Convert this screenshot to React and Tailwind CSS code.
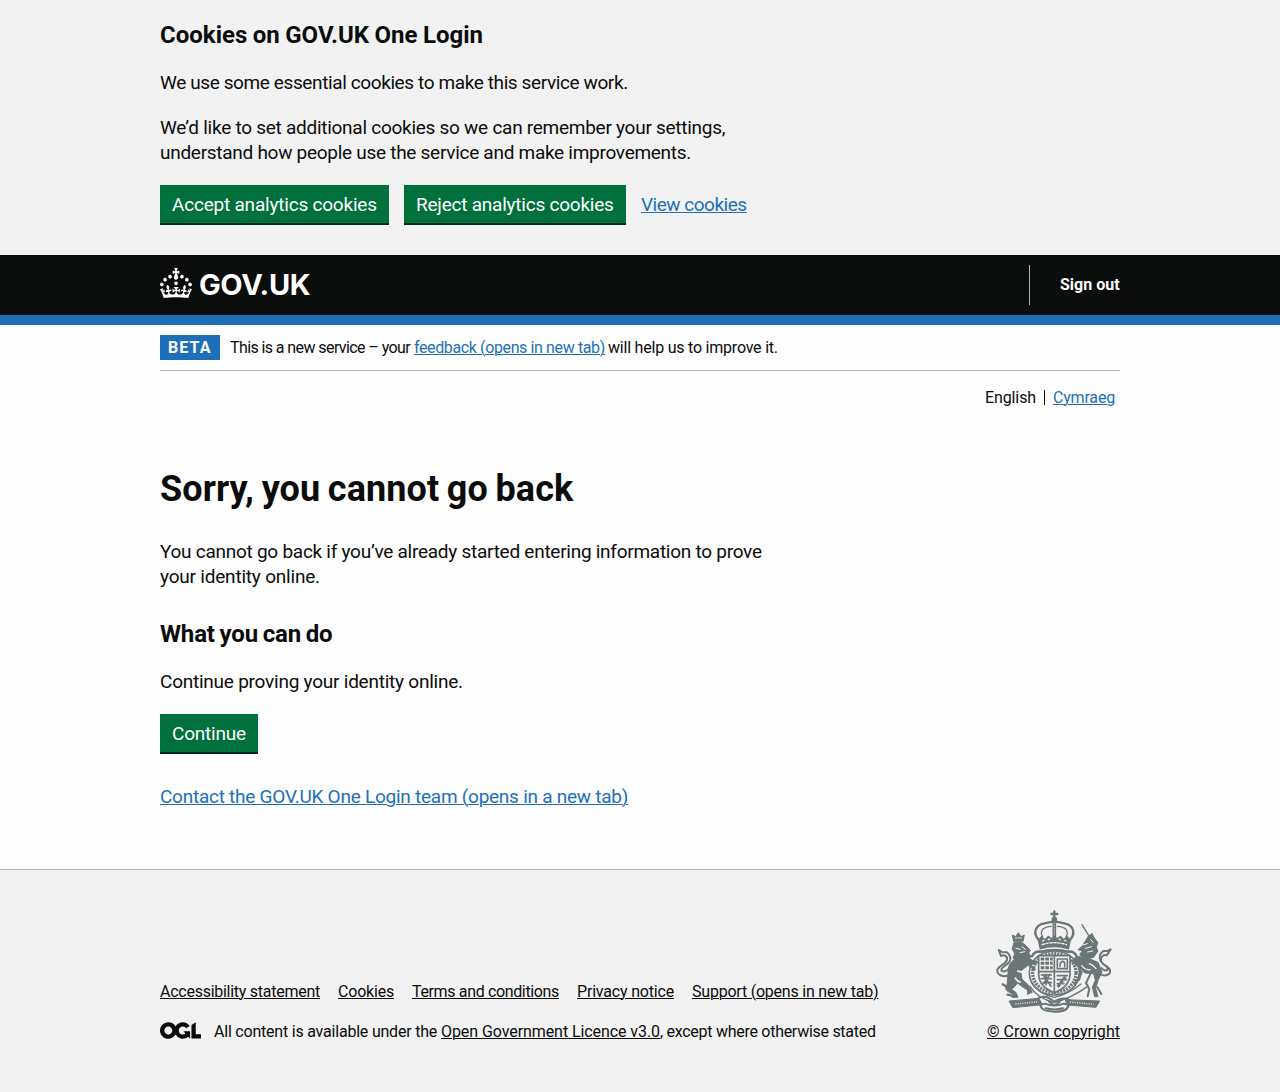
const link =
  "text-[#1d70b8] underline decoration-1 underline-offset-[1px]";
const darkLink =
  "text-[#0b0c0c] underline decoration-1 underline-offset-[1px]";
const button =
  "h-[38px] bg-[#00703c] pl-3 text-left text-[19px] leading-[40px] text-white shadow-[0_2px_0_#002d18] whitespace-nowrap";

function Crown() {
  return (
    <svg className="mb-[5px] h-[30px] w-8 shrink-0" viewBox="0 0 32 30" fill="currentColor" aria-hidden="true">
      <path d="M22.6 10.4c-1 .4-2-.1-2.4-1-.4-.9.1-2 1-2.4.9-.4 2 .1 2.4 1s-.1 2-1 2.4m-5.9 6.7c-.9.4-2-.1-2.4-1-.4-.9.1-2 1-2.4.9-.4 2 .1 2.4 1s-.1 2-1 2.4m10.8-3.7c-1 .4-2-.1-2.4-1-.4-.9.1-2 1-2.4.9-.4 2 .1 2.4 1s0 2-1 2.4m3.3 4.8c-1 .4-2-.1-2.4-1-.4-.9.1-2 1-2.4.9-.4 2 .1 2.4 1s-.1 2-1 2.4M17 4.7l2.3 1.2V2.5l-2.3.7-.2-.2.9-3h-3.4l.9 3-.2.2c-.1.1-2.3-.7-2.3-.7v3.4L15 4.7c.1.1.1.2.2.2l-1.3 4c-.1.2-.1.4-.1.6 0 1.1.8 2 1.9 2.2h.7c1-.2 1.9-1.1 1.9-2.1 0-.2 0-.4-.1-.6l-1.3-4c-.1-.2 0-.2.1-.3m-7.6 5.7c.9.4 2-.1 2.4-1 .4-.9-.1-2-1-2.4-.9-.4-2 .1-2.4 1s0 2 1 2.4m-5 3c.9.4 2-.1 2.4-1 .4-.9-.1-2-1-2.4-.9-.4-2 .1-2.4 1s.1 2 1 2.4m-3.2 4.8c.9.4 2-.1 2.4-1 .4-.9-.1-2-1-2.4-.9-.4-2 .1-2.4 1s0 2 1 2.4m14.8 11c4.4 0 8.6.3 12.3.8 1.1-4.5 2.4-7 3.7-8.8l-2.5-.9c.2 1.3.3 1.9 0 2.7-.4-.4-.8-1.1-1.1-2.3l-1.2 4c.7-.5 1.3-.8 2-.9-1.1 2.5-2.6 3.1-3.5 3-1.1-.2-1.7-1.2-1.5-2.1.3-1.2 1.5-1.5 2.1-.1 1.1-2.3-.8-3-2-2.3 1.9-1.9 2.1-3.5.6-5.6-2.1 1.6-2.1 3.2-1.2 5.5-1.2-1.4-3.2-.6-2.5 1.6.9-1.4 2.1-.5 1.9.8-.2 1.1-1.7 2.1-3.5 1.9-2.7-.2-2.9-2.1-2.9-3.6.7-.1 1.9.5 2.9 1.9l.4-4.3c-1.1 1.1-2.1 1.4-3.2 1.4.4-1.2 2.1-3 2.1-3h-5.4s1.7 1.9 2.1 3c-1.1 0-2.1-.2-3.2-1.4l.4 4.3c1-1.4 2.2-2 2.9-1.9-.1 1.5-.2 3.4-2.9 3.6-1.9.2-3.4-.8-3.5-1.9-.2-1.3 1-2.2 1.9-.8.7-2.3-1.2-3-2.5-1.6.9-2.2.9-3.9-1.2-5.5-1.5 2-1.3 3.7.6 5.6-1.2-.7-3.1 0-2 2.3.6-1.4 1.8-1.1 2.1.1.2.9-.3 1.9-1.5 2.1-.9.2-2.4-.5-3.5-3 .6 0 1.2.3 2 .9l-1.2-4c-.3 1.1-.7 1.9-1.1 2.3-.3-.8-.2-1.4 0-2.7l-2.9.9C1.3 23 2.6 25.5 3.7 30c3.7-.5 7.9-.8 12.3-.8" />
    </svg>
  );
}

function OglLogo() {
  return (
    <svg className="mb-[3px] h-[17px] w-[41px] shrink-0" viewBox="0 0 483.2 195.7" fill="#0b0c0c" aria-hidden="true">
      <path d="M421.5 142.8V.1l-50.7 32.3v161.1h112.4v-50.7zm-122.3-9.6A47.12 47.12 0 0 1 221 97.8c0-26 21.1-47.1 47.1-47.1 16.7 0 31.4 8.7 39.7 21.8l42.7-27.2A97.63 97.63 0 0 0 268.1 0c-36.5 0-68.3 20.1-85.1 49.7A98 98 0 0 0 97.8 0C43.9 0 0 43.9 0 97.8s43.9 97.8 97.8 97.8c36.5 0 68.3-20.1 85.1-49.7a97.76 97.76 0 0 0 149.6 25.4l19.4 22.2h3v-87.8h-80l24.3 27.5zM97.8 145c-26 0-47.1-21.1-47.1-47.1s21.1-47.1 47.1-47.1 47.1 21.1 47.1 47.1S123.8 145 97.8 145" />
    </svg>
  );
}

function RoyalArms() {
  return (
    <svg
      className="h-[106px] w-[120px]"
      viewBox="42 24 360 318"
      fill="none"
      stroke="#6c7676"
      strokeWidth="5"
      strokeLinecap="round"
      strokeLinejoin="round"
      aria-hidden="true"
    >
      {/* crown */}
      <path d="M223 31v18M214 39h18" strokeWidth="7" />
      <circle cx="223" cy="56" r="6" fill="#6c7676" />
      <path d="M177 118C157 96 166 74 190 68c12-3 23-6 33-6s21 3 33 6c24 6 33 28 13 50" strokeWidth="7" />
      <path d="M188 108c-9-12-2-24 8-28 7-3 13-4 18-4M258 108c9-12 2-24-8-28-7-3-13-4-18-4" strokeWidth="4" />
      <path d="M223 62v46" strokeWidth="11" />
      <path d="M223 68v38" stroke="#f2f2f2" strokeWidth="2" strokeDasharray="2 5" />
      <path d="M176 119l8-11 11 9 10-10 11 7 7-8 7 8 11-7 10 10 11-9 8 11-5 24q-42-14-84 0z" fill="#6c7676" />
      <path d="M186 131q37-12 74 0M188 120l4-2M205 116l4-2M237 114l4 2M254 118l4 2" stroke="#f2f2f2" strokeWidth="4" strokeDasharray="7 5" />
      {/* helmet and garter */}
      <path d="M156 166q8-17 28-14 39-11 78 0 20-3 28 14" strokeWidth="7" />
      <path d="M178 153q45-12 90 0" strokeWidth="6" />
      <ellipse cx="223" cy="216" rx="75" ry="66" strokeWidth="5" />
      <ellipse cx="223" cy="216" rx="65" ry="58" strokeWidth="10" strokeDasharray="6 3" strokeLinecap="butt" />
      {/* quartered shield */}
      <path d="M176 164h94v55q0 38-47 56-47-18-47-56z" fill="#f2f2f2" strokeWidth="5" />
      <path d="M223 164v111M176 212h94" strokeWidth="5" />
      <path d="M182 174h36M182 187h36M182 200h36M233 258l24-32" strokeWidth="9" strokeDasharray="11 3" strokeLinecap="butt" />
      <path d="M232 174h30v29h-30zM240 196q0-15 8-15t6 16M184 222h30M184 233h30M190 245h24" strokeWidth="5" />
      <path d="M232 224h30M232 236h28M232 248h20M198 220v32M190 222l23 34M210 220l-20 28" strokeWidth="5" />
      {/* lion */}
      <path d="M101 121l-4-19 10 5 8-12 8 12 10-5-4 19z" fill="#6c7676" strokeWidth="3" />
      <path d="M106 111h18" stroke="#f2f2f2" strokeWidth="3" strokeDasharray="4 4" />
      <path d="M102 126q20-8 35 7l14 15-5 8 7 11-8 9-14 2-16 4-16-11 5-13-7-13z" fill="#6c7676" strokeWidth="3" />
      <path d="M107 142l14 3M120 155l14-3M126 137l10 8" stroke="#f2f2f2" strokeWidth="3" />
      <path d="M105 173q-24 17-21 45l-3 34q-9 11 2 19l16 9-3 9h18l-6-14-13-10 18-18 30 21-1 12 15-6-12-22-19-17-4-25 23-18 25-5-25-17z" fill="#6c7676" strokeWidth="3" />
      <path d="M113 210q13 6 25-3M106 231q6 11 15 12" stroke="#f2f2f2" strokeWidth="5" />
      <path d="M134 175l34 8M141 186l23 19M80 257l-12-7M95 284l-12-3" strokeWidth="7" />
      <path d="M87 222C68 231 50 220 52 207c3-14 25-16 29-31 2-10-9-16-18-11l-7-18 10 6 15 1q17 15 6 30c-8 11-24 14-23 23 1 7 13 5 19-1" strokeWidth="6" />
      {/* unicorn */}
      <path d="M306 71l22 36" strokeWidth="4" />
      <path d="M325 107l11-9 6 13 11 15-5 12 5 12-13 18-23 7-17-14 8-12-13-3 12-10z" fill="#6c7676" strokeWidth="4" />
      <path d="M308 132l14-4M316 142l19-5M323 153l15-3M332 116l8 9" stroke="#f2f2f2" strokeWidth="3" />
      <path d="M289 166l34 5 31 13 12 29-11 23-8 26 7 25h-10l-7-29 9-20-5-20-26-2-24-22-15-11z" fill="#6c7676" strokeWidth="3" />
      <path d="M305 194q13 15 25 12M328 188q13 5 20 15" stroke="#f2f2f2" strokeWidth="4" />
      <path d="M288 181q19 19 10 44l-14 25M305 213l-8 24M332 217l-14 29 10 18-5 22M352 259l12 20" strokeWidth="6" />
      <path d="M359 219c18 10 34 1 31-11-3-13-24-15-27-28-3-12 9-20 17-17l12-18-8 4-14 1q-17 13-8 30c7 13 23 15 21 25-2 6-13 4-19-4" strokeWidth="6" />
      {/* compartment and motto scroll */}
      <path d="M155 245q22 35 68 44 42-9 80-40M150 256q24 38 73 48 48-11 100-48" strokeWidth="4" />
      <path d="M88 300l89-8 10 19-88 9z" fill="#6c7676" strokeWidth="3" />
      <path d="M257 296l102 4-11 19-86-7z" fill="#6c7676" strokeWidth="3" />
      <path d="M106 309l69-7M270 303l71 7" stroke="#f2f2f2" strokeWidth="4" strokeDasharray="3 4" strokeLinecap="butt" />
      <path d="M176 291q21-11 47 11 26-15 43-6M181 312q2 19 42 20t43-20l-14-4q-29 11-58 0z" strokeWidth="6" />
      <path d="M197 322q26 7 52 0M207 302l16 11 17-11" strokeWidth="6" />
    </svg>
  );
}

function CookieBanner() {
  return (
    <section className="h-[255px] bg-[#f2f2f2] pt-5">
      <div className="mx-auto w-[960px]">
        <h2 className="text-2xl leading-[30px] font-bold tracking-[0.02px] [word-spacing:-0.6px]">Cookies on GOV.UK One Login</h2>
        <p className="mt-5 text-[19px] leading-[25px] tracking-[-0.39px]">We use some essential cookies to make this service work.</p>
        <p className="mt-5 text-[19px] leading-[25px] whitespace-nowrap">
          <span className="tracking-[-0.266px]">We’d like to set additional cookies so we can remember your settings,</span>
          <br />
          <span className="tracking-[-0.28px]">understand how people use the service and make improvements.</span>
        </p>
        <div className="mt-5 flex gap-[15px]">
          <button className={`${button} w-[229px] tracking-[-0.209px]`}>Accept analytics cookies</button>
          <button className={`${button} w-[222px] tracking-[-0.225px]`}>Reject analytics cookies</button>
          <a className={`${link} text-[19px] leading-[40px] tracking-[-0.5px]`}>View cookies</a>
        </div>
      </div>
    </section>
  );
}

function Header() {
  return (
    <header className="h-[70px] border-b-[10px] border-[#1d70b8] bg-[#0b0c0c] text-white">
      <div className="mx-auto flex h-[60px] w-[960px] items-center justify-between">
        <a className="flex items-center gap-[7px]">
          <Crown />
          <span className="font-[Inter] text-[29px] leading-[30px] font-bold tracking-[-0.4px]">GOV.UK</span>
        </a>
        <nav className="flex h-10 w-[91px] items-center border-l border-[#b1b4b6] pl-[30px] text-base font-bold whitespace-nowrap">Sign out</nav>
      </div>
    </header>
  );
}

const footerLinks = [
  ["Accessibility statement", "w-40 tracking-[-0.26px]"],
  ["Cookies", "w-14 tracking-[-0.2px]"],
  ["Terms and conditions", "w-[147px] tracking-[-0.355px]"],
  ["Privacy notice", "w-[97px] tracking-[-0.19px]"],
  ["Support (opens in new tab)", "w-[187px] tracking-[-0.22px]"],
];

function Footer() {
  return (
    <footer className="h-[223px] border-t border-[#b1b4b6] bg-[#f2f2f2] text-base leading-5">
      <div className="mx-auto flex w-[960px] items-end justify-between pt-[39px]">
        <div>
          <ul className="flex gap-[18px] whitespace-nowrap">
            {footerLinks.map(([label, fit]) => (
              <li key={label} className={fit}>
                <a className={darkLink}>{label}</a>
              </li>
            ))}
          </ul>
          <div className="mt-5 flex items-center whitespace-nowrap">
            <OglLogo />
            <p className="ml-[13px] flex whitespace-pre">
              <span className="w-[227px] tracking-[-0.21px]">{"All content is available under the "}</span>
              <a className={`${darkLink} w-[219px] tracking-[-0.075px]`}>Open Government Licence v3.0</a>
              <span className="tracking-[-0.277px]">, except where otherwise stated</span>
            </p>
          </div>
        </div>
        <div className="flex w-[133px] flex-col items-center whitespace-nowrap">
          <RoyalArms />
          <a className={`${darkLink} mt-[7px] tracking-[0.03px]`}>© Crown copyright</a>
        </div>
      </div>
    </footer>
  );
}

export default function App() {
  return (
    <div className="min-h-[1092px] bg-[#fdfdfd] font-[Roboto,sans-serif] text-[#0b0c0c]">
      <CookieBanner />
      <Header />
      <div className="mx-auto h-[544px] w-[960px]">
        <div className="flex h-[46px] items-start border-b border-[#b1b4b6] pt-2.5 text-base leading-[25px]">
          <strong className="h-[25px] w-[60px] bg-[#1d70b8] pl-2 font-bold tracking-[1.1px] text-white">BETA</strong>
          <p className="ml-2.5 flex whitespace-pre">
            <span className="w-[184px] tracking-[-0.59px]">{"This is a new service – your "}</span>
            <a className={`${link} w-[191px] tracking-[-0.38px]`}>feedback (opens in new tab)</a>
            <span className="ml-[3px] tracking-[-0.215px]">will help us to improve it.</span>
          </p>
        </div>
        <nav className="mt-[17px] flex h-5 justify-end pr-[5px] text-base leading-5">
          <span className="w-[59px] tracking-[-0.11px]">English</span>
          <span className="mt-[2px] h-[15px] w-px bg-[#0b0c0c]" />
          <a className={`${link} ml-2 w-[62px] tracking-[-0.19px]`}>Cymraeg</a>
        </nav>
        <main className="pt-[61px]">
          <h1 className="text-4xl leading-10 font-bold tracking-[0.08px] [word-spacing:-1.4px]">Sorry, you cannot go back</h1>
          <p className="mt-[30px] text-[19px] leading-[25px] whitespace-nowrap">
            <span className="tracking-[-0.263px]">You cannot go back if you’ve already started entering information to prove</span>
            <br />
            <span className="tracking-[-0.2px]">your identity online.</span>
          </p>
          <h2 className="mt-[30px] text-2xl leading-[30px] font-bold tracking-[-0.15px] [word-spacing:-1.1px]">What you can do</h2>
          <p className="mt-5 text-[19px] leading-[25px] tracking-[-0.235px]">Continue proving your identity online.</p>
          <button className={`${button} mt-5 block w-[98px] tracking-[-0.23px]`}>Continue</button>
          <p className="mt-8 text-[19px] leading-[25px] tracking-[-0.25px]">
            <a className={link}>Contact the GOV.UK One Login team (opens in a new tab)</a>
          </p>
        </main>
      </div>
      <Footer />
    </div>
  );
}
